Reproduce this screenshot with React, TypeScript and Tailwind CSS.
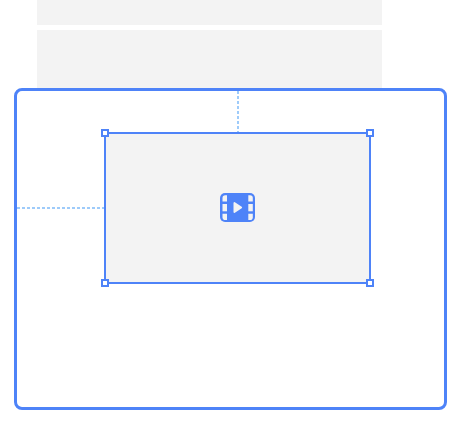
function Handle({ place }: { place: string }) {
  return <span className={`absolute size-2 border-2 border-[#4e83f8] bg-white ${place}`} />;
}

function VideoIcon() {
  return (
    <svg width="35" height="29" viewBox="0 0 35 29" aria-hidden="true">
      <rect width="35" height="29" rx="5" fill="#4e83f8" />
      <g fill="#f3f3f3">
        <path d="M7 2.2V8.6H2.5V5A2.8 2.8 0 0 1 5.3 2.2Z" />
        <rect x="2.5" y="11" width="4.5" height="7.3" />
        <path d="M7 27H5.3A2.8 2.8 0 0 1 2.5 24.2V20.7H7Z" />
        <path d="M28.3 2.2V8.6H32.8V5A2.8 2.8 0 0 0 30 2.2Z" />
        <rect x="28.3" y="11" width="4.5" height="7.3" />
        <path d="M28.3 27H30A2.8 2.8 0 0 0 32.8 24.2V20.7H28.3Z" />
        <path
          d="M14.4 9.9V19.1L21.2 14.5Z"
          stroke="#f3f3f3"
          strokeWidth="1.8"
          strokeLinejoin="round"
        />
      </g>
    </svg>
  );
}

export default function App() {
  return (
    <div className="flex h-[429px] w-[460px] flex-col overflow-hidden bg-white">
      <div className="ml-[37px] flex w-[345px] flex-col gap-[5px]">
        <div className="h-[25px] bg-[#f3f3f3]" />
        <div className="h-[58px] bg-[#f3f3f3]" />
      </div>
      <div className="ml-[14px] grid h-[322px] w-[433px] grid-cols-[87px_267px_1fr] grid-rows-[41px_152px_1fr] rounded-lg border-3 border-[#4e83f8] bg-white">
        <div className="col-start-2 ml-[133px] w-0.5 bg-[repeating-linear-gradient(to_bottom,#9ecbfa_0_3px,transparent_3px_5px)]" />
        <div className="col-start-1 row-start-2 mt-[75px] h-0.5 bg-[repeating-linear-gradient(to_right,#9ecbfa_0_3px,transparent_3px_5px)]" />
        <div className="relative col-start-2 row-start-2 flex items-center justify-center border-2 border-[#4e83f8] bg-[#f3f3f3] pb-px">
          <VideoIcon />
          <Handle place="-top-[5px] -left-[5px]" />
          <Handle place="-top-[5px] -right-[5px]" />
          <Handle place="-bottom-[5px] -left-[5px]" />
          <Handle place="-bottom-[5px] -right-[5px]" />
        </div>
      </div>
    </div>
  );
}
